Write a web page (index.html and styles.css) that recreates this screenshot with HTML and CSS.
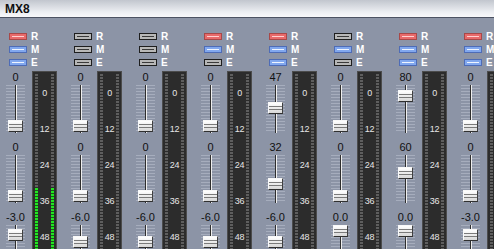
FILE: index.html
```html
<!DOCTYPE html>
<html lang="en">
<head>
  <meta charset="UTF-8">
  <title>MX8</title>
  <link rel="stylesheet" href="styles.css">
</head>
<body>
  <div class="titlebar">MX8</div>

  <div class="mixer">
    <!-- channel 1 -->
    <div class="strip">
      <div class="sends">
        <div class="send"><span class="btn red"></span><span class="key">R</span></div>
        <div class="send"><span class="btn blue"></span><span class="key">M</span></div>
        <div class="send"><span class="btn blue"></span><span class="key">E</span></div>
      </div>
      <div class="body">
        <div class="faders">
          <div class="val">0</div>
          <div class="fader"><div class="thumb" style="top:38px"></div></div>
          <div class="val">0</div>
          <div class="fader"><div class="thumb" style="top:38px"></div></div>
          <div class="val">-3.0</div>
          <div class="fader"><div class="thumb" style="top:7px"></div></div>
        </div>
        <div class="meter">
          <div class="leds"><div class="lit" style="height:82px"></div></div>
          <div class="scale"><span>0</span><span>12</span><span>24</span><span>36</span><span>48</span></div>
          <div class="leds"><div class="lit" style="height:82px"></div></div>
        </div>
      </div>
    </div>

    <!-- channel 2 -->
    <div class="strip">
      <div class="sends">
        <div class="send"><span class="btn"></span><span class="key">R</span></div>
        <div class="send"><span class="btn"></span><span class="key">M</span></div>
        <div class="send"><span class="btn"></span><span class="key">E</span></div>
      </div>
      <div class="body">
        <div class="faders">
          <div class="val">0</div>
          <div class="fader"><div class="thumb" style="top:38px"></div></div>
          <div class="val">0</div>
          <div class="fader"><div class="thumb" style="top:38px"></div></div>
          <div class="val">-6.0</div>
          <div class="fader"><div class="thumb" style="top:14px"></div></div>
        </div>
        <div class="meter">
          <div class="leds"></div>
          <div class="scale"><span>0</span><span>12</span><span>24</span><span>36</span><span>48</span></div>
          <div class="leds"></div>
        </div>
      </div>
    </div>

    <!-- channel 3 -->
    <div class="strip">
      <div class="sends">
        <div class="send"><span class="btn"></span><span class="key">R</span></div>
        <div class="send"><span class="btn"></span><span class="key">M</span></div>
        <div class="send"><span class="btn"></span><span class="key">E</span></div>
      </div>
      <div class="body">
        <div class="faders">
          <div class="val">0</div>
          <div class="fader"><div class="thumb" style="top:38px"></div></div>
          <div class="val">0</div>
          <div class="fader"><div class="thumb" style="top:38px"></div></div>
          <div class="val">-6.0</div>
          <div class="fader"><div class="thumb" style="top:14px"></div></div>
        </div>
        <div class="meter">
          <div class="leds"></div>
          <div class="scale"><span>0</span><span>12</span><span>24</span><span>36</span><span>48</span></div>
          <div class="leds"></div>
        </div>
      </div>
    </div>

    <!-- channel 4 -->
    <div class="strip">
      <div class="sends">
        <div class="send"><span class="btn red"></span><span class="key">R</span></div>
        <div class="send"><span class="btn blue"></span><span class="key">M</span></div>
        <div class="send"><span class="btn"></span><span class="key">E</span></div>
      </div>
      <div class="body">
        <div class="faders">
          <div class="val">0</div>
          <div class="fader"><div class="thumb" style="top:38px"></div></div>
          <div class="val">0</div>
          <div class="fader"><div class="thumb" style="top:38px"></div></div>
          <div class="val">-6.0</div>
          <div class="fader"><div class="thumb" style="top:14px"></div></div>
        </div>
        <div class="meter">
          <div class="leds"></div>
          <div class="scale"><span>0</span><span>12</span><span>24</span><span>36</span><span>48</span></div>
          <div class="leds"></div>
        </div>
      </div>
    </div>

    <!-- channel 5 -->
    <div class="strip">
      <div class="sends">
        <div class="send"><span class="btn red"></span><span class="key">R</span></div>
        <div class="send"><span class="btn blue"></span><span class="key">M</span></div>
        <div class="send"><span class="btn blue"></span><span class="key">E</span></div>
      </div>
      <div class="body">
        <div class="faders">
          <div class="val">47</div>
          <div class="fader"><div class="thumb" style="top:20px"></div></div>
          <div class="val">32</div>
          <div class="fader"><div class="thumb" style="top:26px"></div></div>
          <div class="val">-6.0</div>
          <div class="fader"><div class="thumb" style="top:14px"></div></div>
        </div>
        <div class="meter">
          <div class="leds"></div>
          <div class="scale"><span>0</span><span>12</span><span>24</span><span>36</span><span>48</span></div>
          <div class="leds"></div>
        </div>
      </div>
    </div>

    <!-- channel 6 -->
    <div class="strip">
      <div class="sends">
        <div class="send"><span class="btn"></span><span class="key">R</span></div>
        <div class="send"><span class="btn blue"></span><span class="key">M</span></div>
        <div class="send"><span class="btn"></span><span class="key">E</span></div>
      </div>
      <div class="body">
        <div class="faders">
          <div class="val">0</div>
          <div class="fader"><div class="thumb" style="top:38px"></div></div>
          <div class="val">0</div>
          <div class="fader"><div class="thumb" style="top:38px"></div></div>
          <div class="val">0.0</div>
          <div class="fader"><div class="thumb" style="top:3px"></div></div>
        </div>
        <div class="meter">
          <div class="leds"></div>
          <div class="scale"><span>0</span><span>12</span><span>24</span><span>36</span><span>48</span></div>
          <div class="leds"></div>
        </div>
      </div>
    </div>

    <!-- channel 7 -->
    <div class="strip">
      <div class="sends">
        <div class="send"><span class="btn red"></span><span class="key">R</span></div>
        <div class="send"><span class="btn blue"></span><span class="key">M</span></div>
        <div class="send"><span class="btn blue"></span><span class="key">E</span></div>
      </div>
      <div class="body">
        <div class="faders">
          <div class="val">80</div>
          <div class="fader"><div class="thumb" style="top:8px"></div></div>
          <div class="val">60</div>
          <div class="fader"><div class="thumb" style="top:15px"></div></div>
          <div class="val">0.0</div>
          <div class="fader"><div class="thumb" style="top:3px"></div></div>
        </div>
        <div class="meter">
          <div class="leds"></div>
          <div class="scale"><span>0</span><span>12</span><span>24</span><span>36</span><span>48</span></div>
          <div class="leds"></div>
        </div>
      </div>
    </div>

    <!-- channel 8 -->
    <div class="strip">
      <div class="sends">
        <div class="send"><span class="btn red"></span><span class="key">R</span></div>
        <div class="send"><span class="btn blue"></span><span class="key">M</span></div>
        <div class="send"><span class="btn blue"></span><span class="key">E</span></div>
      </div>
      <div class="body">
        <div class="faders">
          <div class="val">0</div>
          <div class="fader"><div class="thumb" style="top:38px"></div></div>
          <div class="val">0</div>
          <div class="fader"><div class="thumb" style="top:38px"></div></div>
          <div class="val">-3.0</div>
          <div class="fader"><div class="thumb" style="top:7px"></div></div>
        </div>
        <div class="meter">
          <div class="leds"></div>
          <div class="scale"><span>0</span><span>12</span><span>24</span><span>36</span><span>48</span></div>
          <div class="leds"></div>
        </div>
      </div>
    </div>
  </div>
</body>
</html>
```

FILE: styles.css
```css
/* Window */
body {
  margin: 0;
  width: 494px;
  height: 249px;
  overflow: hidden;
  background-color: #8c94a6;
  font-family: 'Liberation Sans', Arial, sans-serif;
  color: #111;
}

.titlebar {
  height: 18px;
  box-sizing: border-box;
  padding: 3px 0 0 5px;
  font-size: 12px;
  font-weight: bold;
  line-height: 12px;
  color: #101010;
  background: linear-gradient(#c2c6ce, #eceef2 70%, #f8f8fa);
  border-bottom: 1px solid #4c5262;
}

/* Mixer strips */
.mixer {
  display: flex;
}

.strip {
  flex: 0 0 65px;
  width: 65px;
}

.sends {
  padding: 12px 0 0 9px;
}

.send {
  display: flex;
  align-items: center;
  gap: 4px;
  height: 13px;
}

.btn {
  position: relative;
  width: 18px;
  height: 7px;
  box-sizing: border-box;
  border: 1px solid #1e1e1e;
  background-color: #b8b8b8;
}

.btn::after {
  content: "";
  position: absolute;
  left: 2px;
  right: 2px;
  top: 2px;
  height: 1px;
  background-color: #3a3a3a;
}

.btn.red {
  border-color: #a84848;
  background-color: #e86a6a;
}
.btn.red::after {
  background-color: #ffd0d0;
}

.btn.blue {
  border-color: #4e6cb6;
  background-color: #82a8ee;
}
.btn.blue::after {
  background-color: #eef4ff;
}

.key {
  font-size: 10px;
  font-weight: bold;
  line-height: 9px;
  color: #fff;
}

/* Fader + meter area */
.body {
  display: flex;
  margin-top: 2px;
}

.faders {
  width: 31px;
  padding-top: 1px;
}

.val {
  height: 10px;
  font-size: 11px;
  line-height: 10px;
  text-align: center;
}

.fader {
  position: relative;
  height: 60px;
}

/* tick marks */
.fader::before {
  content: "";
  position: absolute;
  left: 6px;
  width: 19px;
  top: 3px;
  height: 48px;
  background: repeating-linear-gradient(#a6adbd 0 1px, transparent 1px 3px);
}

/* slot */
.fader::after {
  content: "";
  position: absolute;
  left: 15px;
  width: 1px;
  top: 3px;
  height: 48px;
  background-color: #2e2e2e;
  border-right: 1px solid #eeeeee;
}

.thumb {
  position: absolute;
  left: 8px;
  width: 15px;
  height: 12px;
  box-sizing: border-box;
  z-index: 1;
  border: 1px solid #f8f8f8;
  border-right-color: #404040;
  border-bottom-color: #303030;
  background:
    linear-gradient(transparent 3px, #7a7a7a 3px 4px, transparent 4px 6px, #7a7a7a 6px 7px, transparent 7px),
    linear-gradient(#ffffff, #d8d8d8);
}

.meter {
  display: flex;
  width: 25px;
  height: 200px;
  margin-left: 1px;
  box-sizing: border-box;
  padding-top: 2px;
  background-color: #2c2c2c;
  border: 1px solid #4c4c4c;
}

.leds {
  position: relative;
  width: 4px;
  margin: 0 2px;
  background: repeating-linear-gradient(#5e5e5e 0 2px, transparent 2px 3px);
}

.lit {
  position: absolute;
  left: 0;
  right: 0;
  bottom: 0;
  background: repeating-linear-gradient(#22e622 0 2px, #1a5a1a 2px 3px);
}

.scale {
  display: flex;
  flex-direction: column;
  gap: 27px;
  width: 11px;
  padding-top: 15px;
}

.scale span {
  height: 9px;
  font-size: 9px;
  line-height: 9px;
  color: #e6e6e6;
  text-align: center;
  letter-spacing: -0.3px;
}
```
